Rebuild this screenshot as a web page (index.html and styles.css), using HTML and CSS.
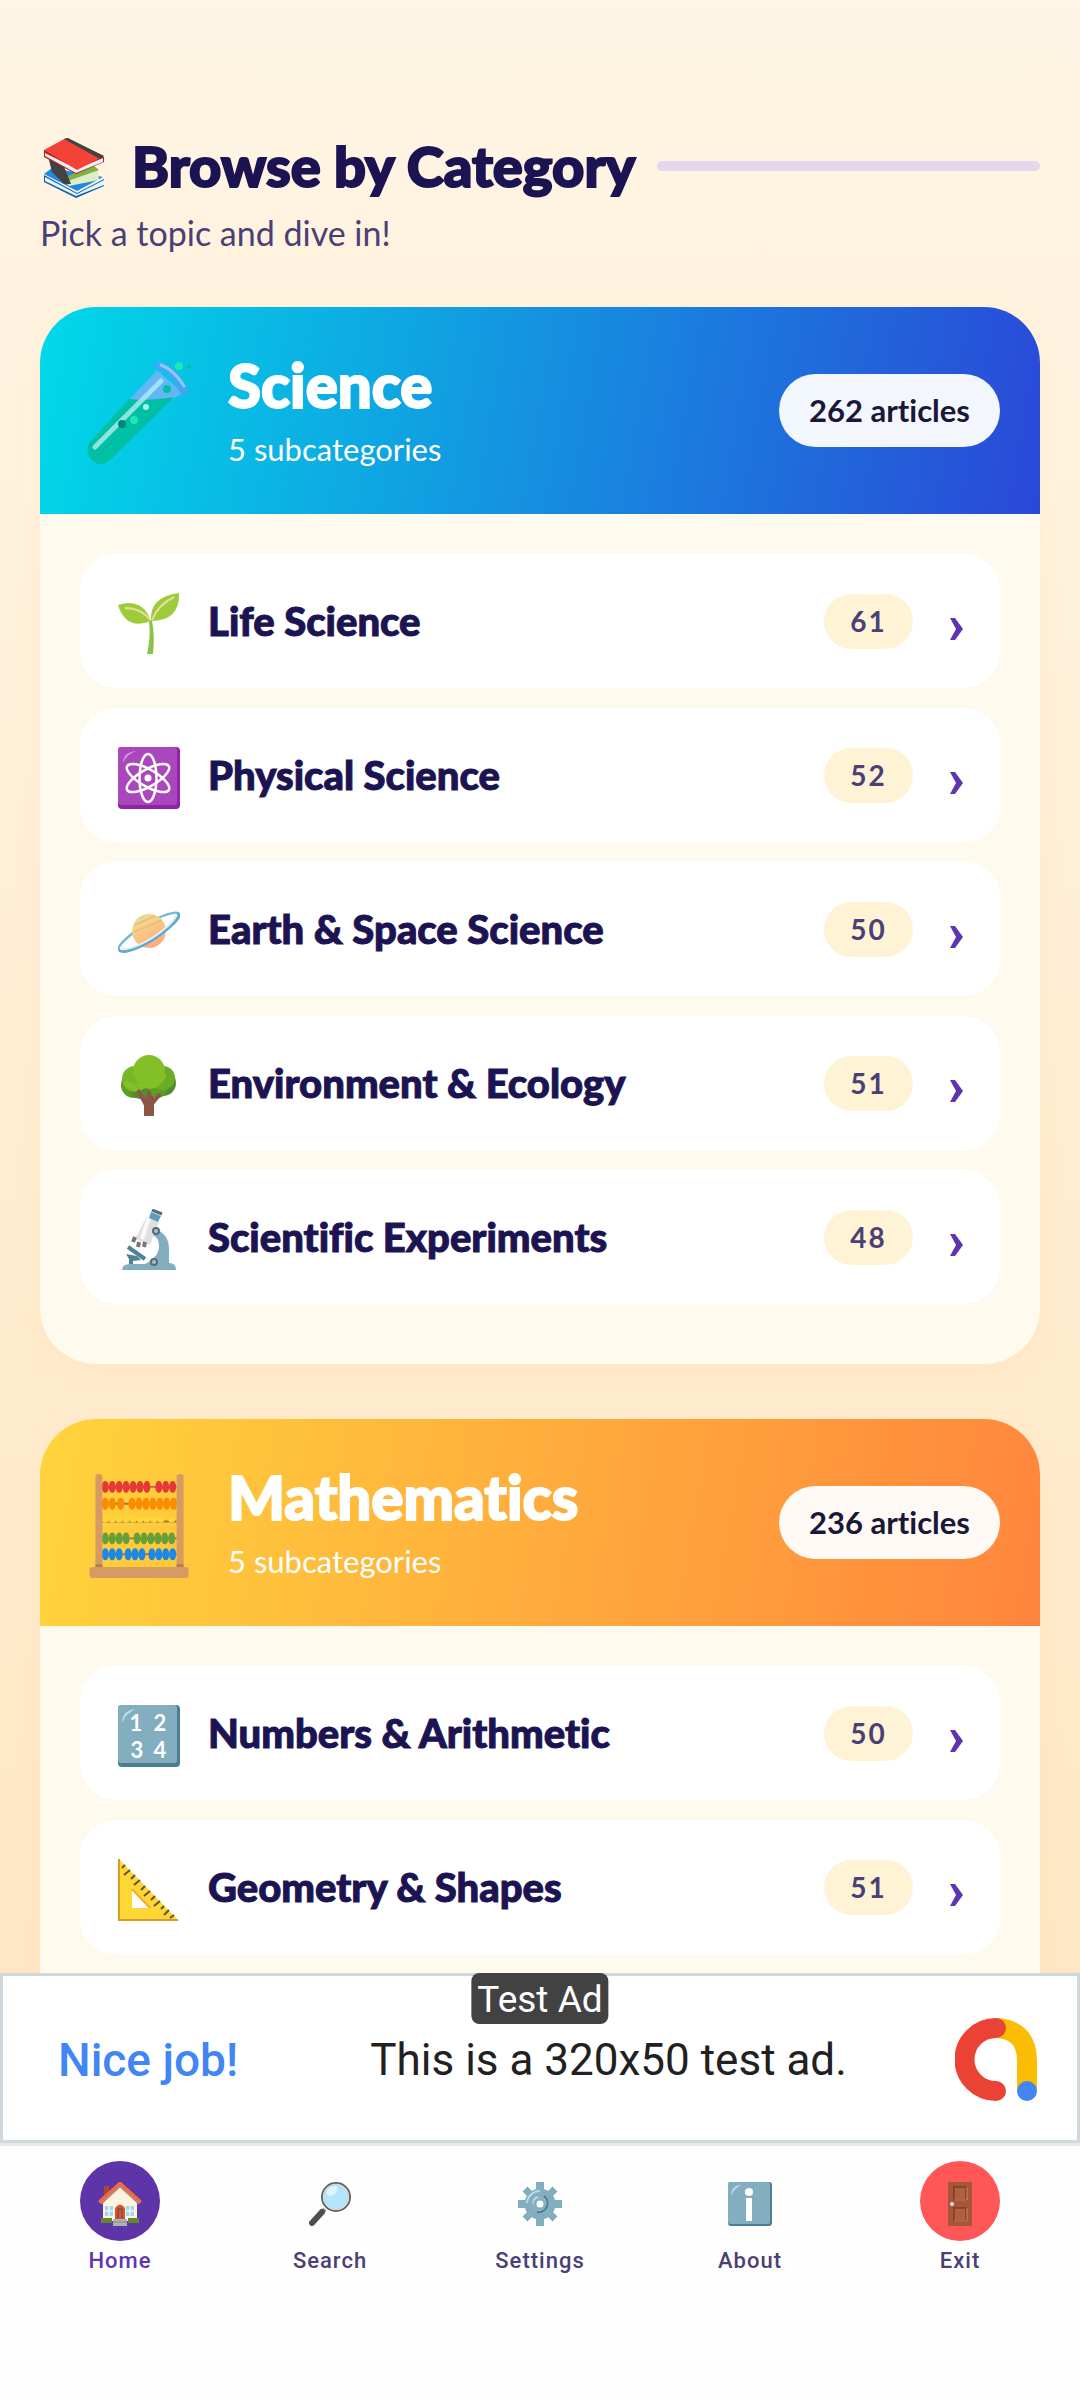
FILE: index.html
```html
<!DOCTYPE html>
<html lang="en">
<head>
    <meta charset="UTF-8">
    <meta name="viewport" content="width=device-width, initial-scale=1.0">
    <title>Browse by Category</title>
    <link rel="stylesheet" href="styles.css">
</head>
<body>
    <main class="content">
        <div class="section-header">
            <svg class="section-icon" viewBox="0 0 60 60">
                <path d="M0 37L33 55L60 41V48L32 60L0 44Z" fill="#0d62a8"/>
                <path d="M1 39L33 56L60 42V47L32 58L1 43Z" fill="#e3f2fd"/>
                <path d="M0 36L8 30L59 39L33 53Z" fill="#1e88e5"/>
                <path d="M19 41L54 32L55 42L25 48Z" fill="#dcedc8"/>
                <path d="M18 40L50 28L55 32L24 43Z" fill="#7cb342"/>
                <path d="M4 18L19 26L27 46L20 46L8 34Z" fill="#424242"/>
                <path d="M0 12L0 19L32 36L60 24V19Z" fill="#b71c1c"/>
                <path d="M1 15L33 31L59 20V24L32 35L1 18Z" fill="#eceff1"/>
                <path d="M0 12L22 0L60 18L33 32Z" fill="#f44336"/>
                <path d="M20 1L24 0L60 18L56 21Z" fill="#424242"/>
            </svg>
            <h1>Browse by Category</h1>
            <span class="section-line"></span>
        </div>
        <p class="section-subtitle">Pick a topic and dive in!</p>

        <section class="category-card">
            <header class="category-header science">
                <svg class="category-icon" viewBox="0 0 104 104">
                    <path d="M70 8L96 31L84 38L42 38Z" fill="#64b5f6"/>
                    <path d="M42 37Q62 39 87 35L24 97Q14 107 5 98Q-3 90 3 80Z" fill="#00bfa5"/>
                    <path d="M72 3Q86 8 97 29" fill="none" stroke="#42a5f5" stroke-width="8" stroke-linecap="round"/>
                    <path d="M74 3Q87 8 97 24" fill="none" stroke="#90caf9" stroke-width="3" stroke-linecap="round"/>
                    <path d="M74 19L8 85" stroke="#b2ebf2" stroke-width="5" stroke-linecap="round" opacity=".8"/>
                    <circle cx="92" cy="4" r="4" fill="#1de9b6"/>
                    <circle cx="102" cy="5" r="2" fill="#00bfa5"/>
                    <circle cx="80" cy="27" r="4" fill="#00bfa5"/>
                    <circle cx="59" cy="45" r="3" fill="#a7ffeb"/>
                    <circle cx="47" cy="58" r="4" fill="#1de9b6"/>
                    <circle cx="35" cy="62" r="4" fill="#00897b"/>
                </svg>
                <div class="category-title">
                    <h2>Science</h2>
                    <p>5 subcategories</p>
                </div>
                <span class="article-count">262 articles</span>
            </header>
            <nav class="subcategory-list">
                <a class="subcategory" href="#">
                    <svg class="subcategory-icon" viewBox="0 0 62 62">
                        <path d="M34 28Q37 42 35 61H29Q33 44 31 28Z" fill="#8bc34a"/>
                        <path d="M0 12Q24 4 33 28Q8 38 0 12Z" fill="#9ccc3c"/>
                        <path d="M33 28Q31 4 61 0Q62 28 33 28Z" fill="#9ccc3c"/>
                        <path d="M7 15Q23 15 32 27M56 4Q40 12 34 27" fill="none" stroke="#e6dd9b" stroke-width="2"/>
                    </svg>
                    <span class="subcategory-name">Life Science</span>
                    <span class="badge">61</span>
                    <svg class="arrow" viewBox="0 0 14 24"><path d="M0 1H5L13 12L5 23H0L6 12Z"/></svg>
                </a>
                <a class="subcategory" href="#">
                    <svg class="subcategory-icon" viewBox="0 0 62 62">
                        <rect width="62" height="62" rx="4" fill="#8e24aa"/>
                        <rect width="59" height="58" rx="3" fill="#ab47bc"/>
                        <path d="M5 16Q5 5 18 4Q8 8 5 16Z" fill="#ce93d8"/>
                        <g fill="none" stroke="#fff" stroke-width="2.5">
                            <ellipse cx="30" cy="31" rx="8.500" ry="24"/>
                            <ellipse cx="30" cy="31" rx="8.500" ry="24" transform="rotate(60 30 31)"/>
                            <ellipse cx="30" cy="31" rx="8.500" ry="24" transform="rotate(-60 30 31)"/>
                        </g>
                        <circle cx="30" cy="31" r="3.500" fill="#fff"/>
                    </svg>
                    <span class="subcategory-name">Physical Science</span>
                    <span class="badge">52</span>
                    <svg class="arrow" viewBox="0 0 14 24"><path d="M0 1H5L13 12L5 23H0L6 12Z"/></svg>
                </a>
                <a class="subcategory" href="#">
                    <svg class="subcategory-icon" viewBox="0 0 62 62">
                        <defs>
                            <linearGradient id="planet" x1="0" y1="0" x2="0.6" y2="1">
                                <stop offset="0" stop-color="#c5dfbd"/>
                                <stop offset=".3" stop-color="#f5d58e"/>
                                <stop offset="1" stop-color="#ffab78"/>
                            </linearGradient>
                        </defs>
                        <ellipse cx="31" cy="31" rx="35" ry="8" transform="rotate(-31 31 31)" fill="none" stroke="#78b7d8" stroke-width="2.500"/>
                        <circle cx="31" cy="30" r="17" fill="url(#planet)"/>
                        <path d="M17 24L37 15M16 31L44 19" stroke="#e8bf75" stroke-width="1.500"/>
                        <path d="M1 49C6 55 32 43 47 30C58 21 64 13 59 12" fill="none" stroke="#64a8cf" stroke-width="2.500"/>
                        <path d="M3 47C9 51 32 40 45 29C54 22 59 16 57 14" fill="none" stroke="#e1eff5" stroke-width="2"/>
                    </svg>
                    <span class="subcategory-name">Earth &amp; Space Science</span>
                    <span class="badge">50</span>
                    <svg class="arrow" viewBox="0 0 14 24"><path d="M0 1H5L13 12L5 23H0L6 12Z"/></svg>
                </a>
                <a class="subcategory" href="#">
                    <svg class="subcategory-icon" viewBox="0 0 62 62">
                        <path d="M26 34H36V61H26Z" fill="#8d5548"/>
                        <circle cx="16" cy="30" r="13" fill="#5c9e1f"/>
                        <circle cx="45" cy="28" r="13" fill="#558b2f"/>
                        <circle cx="22" cy="34" r="10" fill="#558b2f"/>
                        <circle cx="40" cy="34" r="9" fill="#5c9e1f"/>
                        <circle cx="17" cy="24" r="13" fill="#76b72a"/>
                        <circle cx="45" cy="23" r="12" fill="#6cab25"/>
                        <circle cx="31" cy="16" r="16" fill="#83bf27"/>
                        <path d="M7 27Q15 36 27 30Q39 34 46 19" fill="none" stroke="#83bf27" stroke-width="6"/>
                        <path d="M28 50L20 35M33 50L42 39M31 36V54" fill="none" stroke="#8d5548" stroke-width="4"/>
                    </svg>
                    <span class="subcategory-name">Environment &amp; Ecology</span>
                    <span class="badge">51</span>
                    <svg class="arrow" viewBox="0 0 14 24"><path d="M0 1H5L13 12L5 23H0L6 12Z"/></svg>
                </a>
                <a class="subcategory" href="#">
                    <svg class="subcategory-icon" viewBox="0 0 62 62">
                        <path d="M35 19Q51 24 51 40V54Q58 54 58 61H4Q4 55 12 55H27Q41 48 41 37Q41 28 34 26Z" fill="#82aec0"/>
                        <path d="M8 45L19 47L23 51L15 52V55H11V50Z" fill="#4f8299"/>
                        <path d="M10 38L27 50" stroke="#4f8299" stroke-width="4"/>
                        <path d="M29 7L41 13L32 36L17 30Z" fill="#e0e0e0"/>
                        <path d="M31 8L24 30" stroke="#fafafa" stroke-width="4"/>
                        <path d="M33 3L43 7L40 13L31 9Z" fill="#5d9fba"/>
                        <path d="M34 1L44 5" stroke="#546e7a" stroke-width="3"/>
                        <path d="M17 28L15 33M21 33L20 38M27 33L26 38" stroke="#757575" stroke-width="4"/>
                        <circle cx="38" cy="22" r="4" fill="#546e7a"/>
                        <circle cx="38" cy="22" r="2" fill="#b0bec5"/>
                        <circle cx="36" cy="53" r="4" fill="#546e7a"/>
                        <circle cx="36" cy="53" r="2" fill="#b0bec5"/>
                    </svg>
                    <span class="subcategory-name">Scientific Experiments</span>
                    <span class="badge">48</span>
                    <svg class="arrow" viewBox="0 0 14 24"><path d="M0 1H5L13 12L5 23H0L6 12Z"/></svg>
                </a>
            </nav>
        </section>

        <section class="category-card">
            <header class="category-header math">
                <svg class="category-icon" viewBox="-2 0 104 105">
                    <path d="M13 13H88M13 30H88M13 48H88M13 65H88M13 81H88" stroke="#a9714b" stroke-width="2"/>
                    <!-- beads: short round dashes, stretched into ovals -->
                    <g transform="scale(1 2)" fill="none" stroke-width="6" stroke-linecap="round" stroke-dasharray="1 6">
                        <path d="M15.500 6.500h30M50.500 6.500h9M69.500 6.500h16" stroke="#e53935"/>
                        <path d="M15.500 15h9M31 15h1M42.500 15h43" stroke="#fb8c00"/>
                        <path d="M15.500 32.500h23M47.500 32.500h37" stroke="#689f38"/>
                        <path d="M15.500 40.500h16M38.500 40.500h16M62.500 40.500h23" stroke="#1e88e5"/>
                    </g>
                    <path d="M15.500 46h58M82.500 46h1" fill="none" stroke="#fdd835" stroke-width="6" stroke-linecap="round" stroke-dasharray="1 6"/>
                    <rect x="6" width="7" height="97" rx="3" fill="#d69a63"/>
                    <rect x="88" width="7" height="97" rx="3" fill="#d69a63"/>
                    <path d="M6 91H13V95H6ZM88 91H95V95H88Z" fill="#b27b4b"/>
                    <rect y="94" width="100" height="11" rx="3" fill="#d69a63"/>
                </svg>
                <div class="category-title">
                    <h2>Mathematics</h2>
                    <p>5 subcategories</p>
                </div>
                <span class="article-count">236 articles</span>
            </header>
            <nav class="subcategory-list">
                <a class="subcategory" href="#">
                    <svg class="subcategory-icon" viewBox="0 0 62 62">
                        <rect width="62" height="62" rx="4" fill="#4a7f92"/>
                        <rect width="59" height="58" rx="3" fill="#82aec0"/>
                        <path d="M4 18Q4 5 18 4Q8 8 4 18Z" fill="#b9dbea"/>
                        <g class="digits">
                            <text x="18" y="26">1</text>
                            <text x="42" y="26">2</text>
                            <text x="19" y="53">3</text>
                            <text x="42" y="53">4</text>
                        </g>
                    </svg>
                    <span class="subcategory-name">Numbers &amp; Arithmetic</span>
                    <span class="badge">50</span>
                    <svg class="arrow" viewBox="0 0 14 24"><path d="M0 1H5L13 12L5 23H0L6 12Z"/></svg>
                </a>
                <a class="subcategory" href="#">
                    <svg class="subcategory-icon" viewBox="0 0 62 62">
                        <path d="M1 0V62H61ZM14 30L32 49H14Z" fill="#fdd835" fill-rule="evenodd"/>
                        <path d="M1 0V61H60" fill="none" stroke="#d99a2b" stroke-width="2"/>
                        <path d="M14 30L32 49" stroke="#f9a825" stroke-width="2"/>
                        <path d="M7 6L4 9M12 11L6 16M17 16L13 20M22 21L16 26M27 27L23 31M32 32L26 37M37 37L33 41M42 42L36 47M46 47L43 50M51 51L46 56M56 56L52 59" stroke="#6d4c2f" stroke-width="2"/>
                    </svg>
                    <span class="subcategory-name">Geometry &amp; Shapes</span>
                    <span class="badge">51</span>
                    <svg class="arrow" viewBox="0 0 14 24"><path d="M0 1H5L13 12L5 23H0L6 12Z"/></svg>
                </a>
            </nav>
        </section>
    </main>

    <aside class="ad">
        <span class="ad-label">Test Ad</span>
        <strong class="ad-title">Nice job!</strong>
        <span class="ad-text">This is a 320x50 test ad.</span>
        <svg class="ad-logo" viewBox="0 0 84 84">
            <path d="M42 10Q72 12 72 43V72" fill="none" stroke="#fbbc04" stroke-width="20"/>
            <path d="M41 10A31 31 0 1 0 41 73" fill="none" stroke="#ea4335" stroke-width="20" stroke-linecap="round"/>
            <circle cx="72" cy="73" r="10" fill="#4285f4"/>
        </svg>
    </aside>

    <nav class="bottom-nav">
        <button class="nav-item active">
            <span class="nav-icon">
                <svg viewBox="0 0 44 44">
                    <path d="M6 4H11V18H6Z" fill="#a84b2c"/>
                    <path d="M5 21L22 4L39 21V39H5Z" fill="#fff3e0"/>
                    <path d="M3 36H14V41H3ZM30 36H41V41H30Z" fill="#66882c"/>
                    <path d="M7 24H15V34H7ZM28 24H36V34H28Z" fill="#a7d7e6"/>
                    <path d="M11 24V34M7 29H15M32 24V34M28 29H36" stroke="#fff"/>
                    <path d="M17 38V26Q22 19 27 26V38Z" fill="#c75b39"/>
                    <path d="M20 36V27H24V36" fill="none" stroke="#8d3b22"/>
                    <path d="M15 37H29V44H15Z" fill="#b0b0b0"/>
                    <path d="M15 40H29" stroke="#8a8a8a"/>
                    <path d="M2 21L22 3L42 21" fill="none" stroke="#b98b6e" stroke-width="4"/>
                    <path d="M1 20L22 1L43 20" fill="none" stroke="#f4683c" stroke-width="3"/>
                </svg>
            </span>
            Home
        </button>
        <button class="nav-item">
            <span class="nav-icon">
                <svg viewBox="0 0 44 44">
                    <path d="M17 27L14 31" stroke="#9e9e9e" stroke-width="4"/>
                    <path d="M14 30L4 41" stroke="#4e4e4e" stroke-width="6" stroke-linecap="round"/>
                    <circle cx="28" cy="15" r="14" fill="#b3e5fc" stroke="#616161" stroke-width="2"/>
                    <circle cx="28" cy="15" r="12.500" fill="none" stroke="#cfd8dc" stroke-width="1.500"/>
                    <ellipse cx="24" cy="9" rx="6" ry="4" fill="#e1f5fe" transform="rotate(-35 24 9)"/>
                </svg>
            </span>
            Search
        </button>
        <button class="nav-item">
            <span class="nav-icon">
                <svg viewBox="0 0 44 44">
                    <g stroke="#82aec0" stroke-width="8">
                        <path d="M22 0V15M22 29V44M0 22H15M29 22H44"/>
                        <path d="M7 7L17 17M27 27L37 37M7 37L17 27M27 17L37 7" stroke-width="7"/>
                    </g>
                    <circle cx="22" cy="22" r="11" fill="none" stroke="#82aec0" stroke-width="9"/>
                    <path d="M9 21A13 13 0 0 1 22 9" fill="none" stroke="#b9dbea" stroke-width="2"/>
                    <path d="M15 21A7 7 0 0 1 20 15" fill="none" stroke="#b9dbea" stroke-width="2"/>
                    <path d="M26 14A9 9 0 0 1 19 30" fill="none" stroke="#4a7f92" stroke-width="2"/>
                    <circle cx="22" cy="22" r="4" fill="#fff"/>
                    <circle cx="22" cy="22" r="5" fill="none" stroke="#82aec0" stroke-width="3"/>
                </svg>
            </span>
            Settings
        </button>
        <button class="nav-item">
            <span class="nav-icon">
                <svg viewBox="0 0 44 44">
                    <rect width="44" height="44" rx="3" fill="#4a7f92"/>
                    <rect width="42" height="42" rx="2" fill="#82aec0"/>
                    <path d="M3 14Q3 3 14 3Q6 6 3 14Z" fill="#b9dbea"/>
                    <circle cx="21" cy="10" r="4" fill="#fff"/>
                    <path d="M18 16H24V39H18Z" fill="#fff"/>
                </svg>
            </span>
            About
        </button>
        <button class="nav-item exit">
            <span class="nav-icon">
                <svg viewBox="0 0 44 44">
                    <path d="M10 0H34V44H10Z" fill="#a6573a"/>
                    <path d="M16 5H28V18H16ZM16 26H28V39H16Z" fill="#b06040" stroke="#7d3c25" stroke-width="1.500"/>
                    <path d="M16 18H29V5M16 39H29V26" fill="none" stroke="#cf8562"/>
                    <circle cx="14" cy="22" r="2" fill="#e0e0e0"/>
                </svg>
            </span>
            Exit
        </button>
    </nav>
</body>
</html>
```
FILE: styles.css
```css
* {
    box-sizing: border-box;
}
body {
    margin: 0;
    height: 100vh;
    display: flex;
    flex-direction: column;
    font-family: Lato, "Open Sans", sans-serif;
    font-variant-ligatures: none;
    color: #1c1452;
    background: linear-gradient(#fff5e4, #ffe4be);
}
h1, h2, p {
    margin: 0;
}
.content {
    flex: 1;
    min-height: 0;
    overflow: hidden;
    padding: 126px 40px 0;
}

/* page heading */
.section-header {
    display: flex;
    align-items: center;
    gap: 22px;
    height: 80px;
}
.section-icon {
    width: 60px;
    height: 60px;
    margin: 4px 6px 0 4px;
}
.section-header h1 {
    font-size: 56px;
    font-weight: 900;
    line-height: 80px;
    white-space: nowrap;
    -webkit-text-stroke: 2px;
}
.section-line {
    flex: 1;
    height: 10px;
    border-radius: 5px;
    background: #e6d6ee;
}
.section-subtitle {
    margin-bottom: 48px;
    font-size: 34px;
    line-height: 53px;
    color: #4a4075;
}

/* category cards */
.category-card {
    margin-bottom: 55px;
    border-radius: 56px;
    overflow: hidden;
    background: #fffaee;
    box-shadow: 0 8px 24px rgba(255, 180, 80, 0.08);
}
.category-header {
    display: flex;
    align-items: center;
    height: 207px;
    padding: 0 40px 0 47px;
    color: #fff;
}
.category-header.science {
    background: linear-gradient(100deg, #00d9e8, #2a48d8);
}
.category-header.math {
    background: linear-gradient(100deg, #ffd43b, #ff853d);
}
.category-icon {
    width: 104px;
    height: 104px;
    margin: 6px 37px 0 0;
}
.category-title {
    flex: 1;
    padding-top: 2px;
}
.category-title h2 {
    font-size: 60px;
    font-weight: 900;
    line-height: 72px;
    -webkit-text-stroke: 2px;
}
.category-title p {
    margin-top: 3px;
    font-size: 31px;
    line-height: 50px;
}
.article-count {
    padding: 0 30px;
    border-radius: 37px;
    font-size: 31px;
    font-weight: 700;
    line-height: 73px;
    color: #1a1838;
    background: rgba(255, 255, 255, 0.95);
}

/* rows in a card */
.subcategory-list {
    display: flex;
    flex-direction: column;
    gap: 20px;
    padding: 40px 40px 60px;
}
.category-card:last-child .subcategory-list {
    padding-bottom: 200px;
}
.subcategory {
    display: flex;
    align-items: center;
    height: 134px;
    padding: 0 36px 0 38px;
    border-radius: 36px;
    color: #1c1452;
    text-decoration: none;
    background: #fff;
}
.subcategory-icon {
    width: 62px;
    height: 62px;
    margin: 5px 28px 0 0;
}
.subcategory-name {
    flex: 1;
    font-size: 40px;
    font-weight: 900;
    -webkit-text-stroke: 1px;
}
.badge {
    width: 89px;
    border-radius: 28px;
    font-size: 28px;
    font-weight: 700;
    line-height: 55px;
    letter-spacing: 2px;
    text-align: center;
    color: #4a4075;
    background: #fff3d6;
}
.arrow {
    width: 14px;
    height: 24px;
    margin: 16px 0 0 37px;
    fill: #5e35b1;
}
.digits {
    fill: #fff;
    font-size: 22px;
    font-weight: 700;
    text-anchor: middle;
}

/* ad banner */
.ad {
    position: relative;
    display: flex;
    align-items: center;
    height: 170px;
    padding: 3px 38px 0 55px;
    border: 3px solid #cfd8dc;
    font-family: Roboto, sans-serif;
    font-size: 44px;
    background: #fff;
}
.ad-label {
    position: absolute;
    top: -3px;
    left: 50%;
    transform: translateX(-50%);
    padding: 2px 6px 0;
    border-radius: 8px;
    font-size: 37px;
    line-height: 49px;
    color: #fff;
    background: #424242;
}
.ad-title {
    font-size: 46px;
    font-weight: 500;
    color: #4285f4;
}
.ad-text {
    flex: 1;
    padding-left: 24px;
    text-align: center;
    color: #212121;
}
.ad-logo {
    width: 84px;
    height: 84px;
}

/* bottom navigation */
.bottom-nav {
    display: flex;
    height: 257px;
    padding: 15px 15px 0;
    border-top: 3px solid #e8e8e8;
    background: #fefefe;
}
.nav-item {
    flex: 1;
    display: flex;
    flex-direction: column;
    align-items: center;
    height: 120px;
    padding: 0;
    border: none;
    font-family: Roboto, sans-serif;
    font-size: 22px;
    font-weight: 500;
    line-height: 40px;
    letter-spacing: 1px;
    color: #4a4075;
    background: none;
    cursor: pointer;
}
.nav-item.active {
    color: #5e35b1;
}
.nav-icon {
    display: flex;
    align-items: center;
    justify-content: center;
    width: 80px;
    height: 80px;
    padding-top: 5px;
    border-radius: 50%;
}
.nav-icon svg {
    width: 44px;
    height: 44px;
}
.active .nav-icon {
    background: #5e35a8;
}
.exit .nav-icon {
    background: #ff5757;
}
```
